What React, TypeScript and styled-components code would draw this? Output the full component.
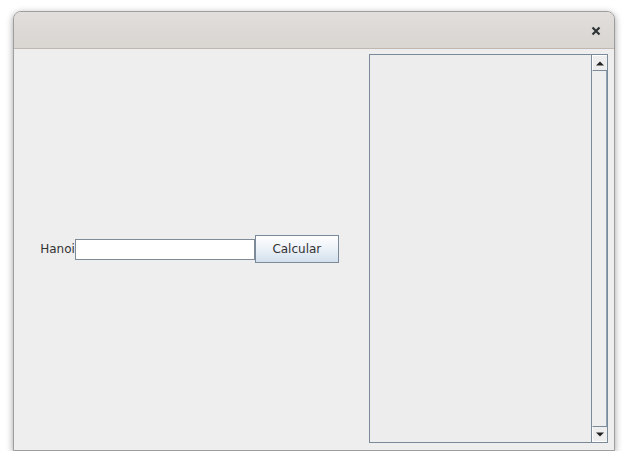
import React from "react";
import styled, { createGlobalStyle } from "styled-components";

const GlobalStyle = createGlobalStyle`
  html, body {
    margin: 0;
    padding: 0;
    background: #ffffff;
  }
  body {
    font-family: "DejaVu Sans", "Liberation Sans", sans-serif;
  }
`;

const Window = styled.div`
  box-sizing: border-box;
  margin: 11px 0 0 13px;
  width: 602px;
  height: 440px;
  border: 1px solid #9e9e9e;
  border-radius: 8px 8px 0 0;
  box-shadow: 0 2px 7px rgba(0, 0, 0, 0.38);
  display: flex;
  flex-direction: column;
  overflow: hidden;
  background: #eeeeee;
`;

const TitleBar = styled.div`
  height: 36px;
  flex: none;
  border-bottom: 1px solid #bfb7b0;
  background: linear-gradient(to bottom, #e1dedb, #d9d5d1);
  display: flex;
  align-items: center;
  justify-content: flex-end;
  padding-right: 12px;
`;

const CloseButton = styled.button`
  width: 12px;
  height: 12px;
  padding: 0;
  margin: 2px 0 0 0;
  border: none;
  background: transparent;
  display: flex;
  align-items: center;
  justify-content: center;
`;

const Content = styled.div`
  flex: 1;
  display: flex;
  background: #eeeeee;
`;

const LeftPane = styled.div`
  flex: 1;
  display: flex;
  align-items: center;
  justify-content: center;
  padding-bottom: 1px;
`;

const Label = styled.span`
  font-size: 12px;
  color: #333333;
  line-height: 21px;
  padding-top: 1px;
`;

const TextField = styled.input`
  box-sizing: border-box;
  width: 180px;
  height: 21px;
  margin: 0;
  padding: 0 3px;
  border: 1px solid #7f8b97;
  box-shadow: inset 1px 1px 0 #ffffff;
  background: #ffffff;
  font-family: "DejaVu Sans", sans-serif;
  font-size: 12px;
  outline: none;
`;

const Button = styled.button`
  box-sizing: border-box;
  width: 84px;
  height: 28px;
  margin: 0;
  padding: 0;
  border: 1px solid #7a8a99;
  background: linear-gradient(to bottom, #fdfeff 0%, #eef3f8 45%, #d3e0ed 100%);
  font-family: "DejaVu Sans", sans-serif;
  font-size: 12px;
  color: #333333;
`;

const ScrollPane = styled.div`
  box-sizing: border-box;
  width: 239px;
  margin: 5px 6px 7px 4px;
  border: 1px solid #7a8a99;
  background: #ededed;
  display: flex;
`;

const Viewport = styled.div`
  flex: 1;
`;

const ScrollBar = styled.div`
  width: 15px;
  display: flex;
  flex-direction: column;
  border-left: 1px solid #7a8a99;
`;

const ArrowButton = styled.div<{ $dir: "up" | "down" }>`
  box-sizing: border-box;
  height: 16px;
  flex: none;
  display: flex;
  align-items: center;
  justify-content: center;
  background: #eeeeee;
  border-top: 1px solid #ffffff;
  border-left: 1px solid #ffffff;
  ${(p) =>
    p.$dir === "up"
      ? "border-bottom: 1px solid #7a8a99;"
      : "border-top: 1px solid #7a8a99; border-bottom: 1px solid #ffffff;"}
`;

const Track = styled.div`
  flex: 1;
  box-sizing: border-box;
  border-right: 1px solid #8ea3b8;
  background: #eeeeee;
`;

const Arrow = ({ dir }: { dir: "up" | "down" }) => (
  <svg width="8" height="5" viewBox="0 0 8 5">
    {dir === "up" ? (
      <polygon points="0,4.5 8,4.5 4,0.5" fill="#222" />
    ) : (
      <polygon points="0,0.5 8,0.5 4,4.5" fill="#222" />
    )}
  </svg>
);

export default function App() {
  return (
    <>
      <GlobalStyle />
      <Window>
        <TitleBar>
          <CloseButton aria-label="Close">
            <svg width="10" height="10" viewBox="0 0 10 10">
              <path d="M1.5 1.5 L8.5 8.5 M8.5 1.5 L1.5 8.5" stroke="#2e3436" strokeWidth="2.2" strokeLinecap="butt" />
            </svg>
          </CloseButton>
        </TitleBar>
        <Content>
          <LeftPane>
            <Label>Hanoi</Label>
            <TextField />
            <Button>Calcular</Button>
          </LeftPane>
          <ScrollPane>
            <Viewport />
            <ScrollBar>
              <ArrowButton $dir="up">
                <Arrow dir="up" />
              </ArrowButton>
              <Track />
              <ArrowButton $dir="down">
                <Arrow dir="down" />
              </ArrowButton>
            </ScrollBar>
          </ScrollPane>
        </Content>
      </Window>
    </>
  );
}
